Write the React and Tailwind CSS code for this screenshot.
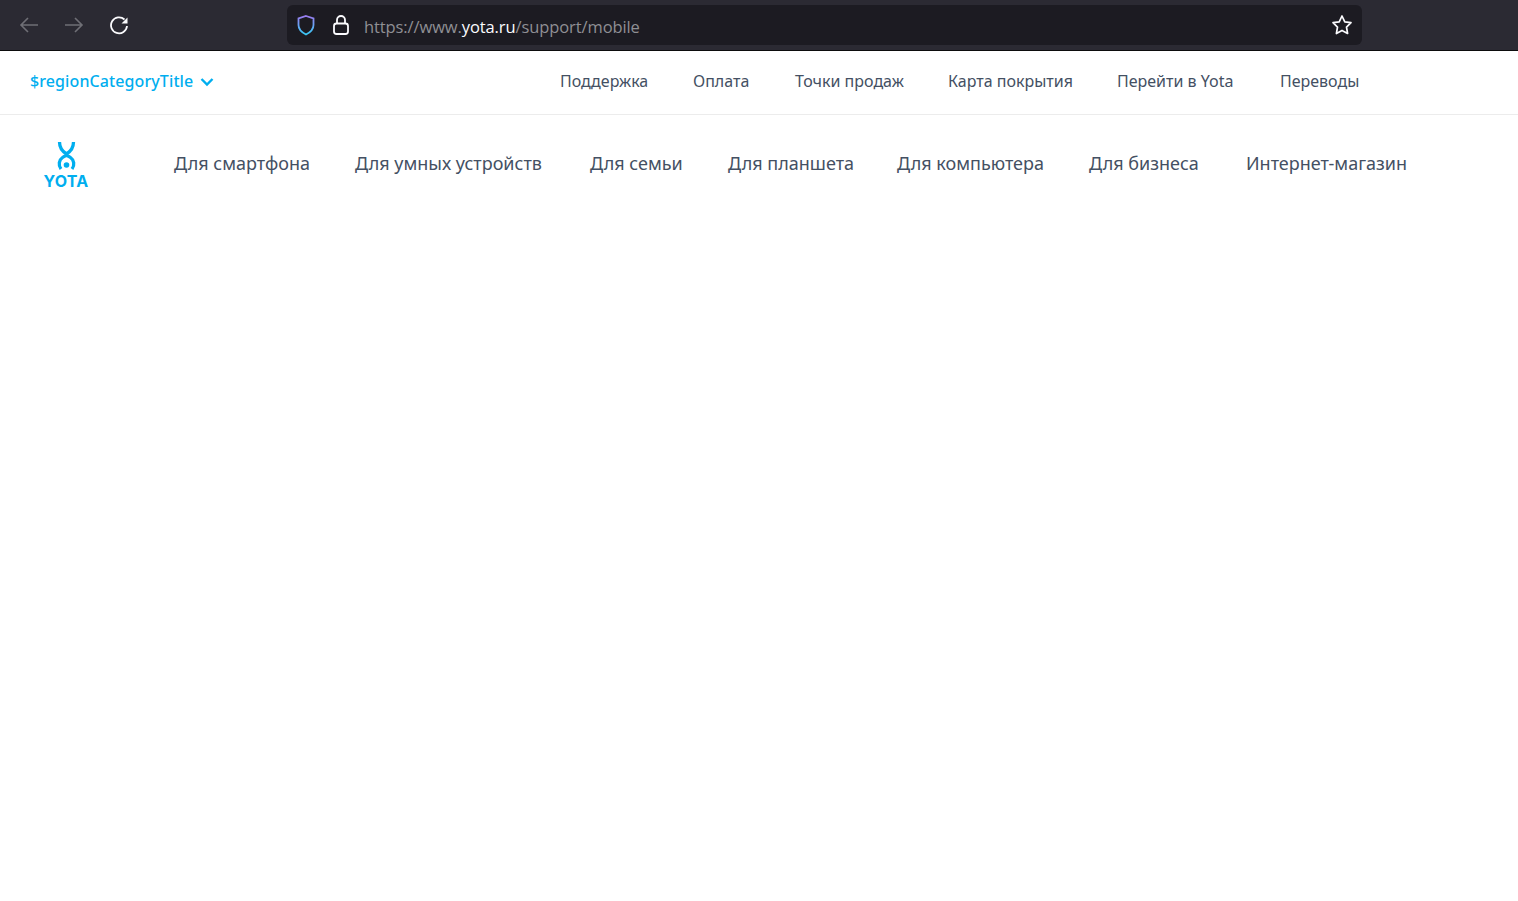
const top = [
  ["Поддержка", "w-[88px]"],
  ["Оплата", "w-[57px]"],
  ["Точки продаж", "w-[108px]"],
  ["Карта покрытия", "w-[124px]"],
  ["Перейти в Yota", "w-[118px]"],
  ["Переводы", "w-[79px]"],
];
const main = [
  ["Для смартфона", "w-[136px]"],
  ["Для умных устройств", "w-[190px]"],
  ["Для семьи", "w-[93px]"],
  ["Для планшета", "w-[124px]"],
  ["Для компьютера", "w-[147px]"],
  ["Для бизнеса", "w-[112px]"],
  ["Интернет-магазин", "w-[164px]"],
];

function Logo() {
  return (
    <div className="flex w-[46px] flex-col items-center">
      <svg width="21" height="29" viewBox="0 0 21 29" fill="none" className="block">
        <path d="M3.500 1C3.500 7 6.500 10.500 10.500 13C14.500 10.500 17.500 7 17.500 1" stroke="#00aeef" strokeWidth="3.300" />
        <path d="M5 28C2 24 3 19 6.500 16.500Q8.500 15 10.500 14.500Q12.500 15 14.500 16.500C18 19 19 24 16 28" stroke="#00aeef" strokeWidth="3.300" />
        <circle cx="10.500" cy="24" r="2.800" fill="#00aeef" />
      </svg>
      <span className="mt-[3px] font-['Inter',sans-serif] text-[16px] leading-[16px] font-bold tracking-[0.3px] text-[#00aeef]">YOTA</span>
    </div>
  );
}

export default function App() {
  return (
    <div className="min-h-[901px] bg-white font-['Noto_Sans',sans-serif]">
      <div className="flex h-[51px] items-center border-b border-[#0c0c0d] bg-[#2b2a33]">
        <div className="ml-[19px] flex items-center gap-[25px]">
          <svg width="20" height="20" viewBox="0 0 20 20" fill="none" stroke="#6f6f76" strokeWidth="1.600"><path d="M19 10H2M9 3l-7 7 7 7" /></svg>
          <svg width="20" height="20" viewBox="0 0 20 20" fill="none" stroke="#6f6f76" strokeWidth="1.600"><path d="M1 10h17M11 3l7 7-7 7" /></svg>
          <svg width="20" height="20" viewBox="0 0 20 20" fill="none" stroke="#fbfbfe" strokeWidth="1.800"><path d="M15.500 4.500A8 8 0 1 0 18 11" /><path d="M18.500 2.500v6h-6z" fill="#fbfbfe" stroke="none" /></svg>
        </div>
        <div className="ml-[158px] flex h-[40px] w-[1075px] items-center rounded-[6px] bg-[#1c1b22] pl-[9px] pr-[9px]">
          <svg width="20" height="22" viewBox="0 0 20 22" fill="none" strokeWidth="1.800">
            <defs><linearGradient id="sh" x1="0" y1="0" x2="0" y2="1"><stop offset="0" stopColor="#9a7cf0" /><stop offset="1" stopColor="#38c8f5" /></linearGradient></defs>
            <path d="M10 2l7.500 2.500v6.500c0 4.500-3.500 7.500-7.500 9.500-4-2-7.500-5-7.500-9.500V4.500z" stroke="url(#sh)" />
          </svg>
          <svg className="ml-[15px]" width="20" height="22" viewBox="0 0 20 22" fill="none" stroke="#fbfbfe" strokeWidth="1.800"><rect x="3" y="9.500" width="14" height="10.500" rx="2.500" /><path d="M6 9.500V6a4 4 0 0 1 8 0v3.500" /></svg>
          <div className="ml-[13px] translate-y-[2px] font-['Open_Sans',sans-serif] text-[16.500px] leading-[24px] tracking-[-0.1px] text-[#8f8f94]">https://www.<span className="text-[#fbfbfe]">yota.ru</span>/support/mobile</div>
          <svg className="ml-auto" width="22" height="22" viewBox="0 0 22 22" fill="none" stroke="#fbfbfe" strokeWidth="1.700" strokeLinejoin="round"><path d="M11 2l2.800 5.900 6.200.8-4.500 4.400 1.100 6.400L11 16.400l-5.600 3.100 1.100-6.400L2 8.700l6.200-.8z" /></svg>
        </div>
      </div>

      <div className="flex h-[64px] items-center border-b border-[#ececec] pb-[4px] pl-[30px] pr-[159px]">
        <div className="flex items-center gap-[7px] text-[16px] font-medium tracking-[0.1px] text-[#00aeef]">
          <span>$regionCategoryTitle</span>
          <svg width="14" height="10" viewBox="0 0 14 10" fill="none" stroke="#00aeef" strokeWidth="2.400" className="translate-y-[1px]"><path d="M1.500 2l5.500 5.500L12.500 2" /></svg>
        </div>
        <nav className="ml-auto flex gap-[45px] text-[16px] text-[#445063]">
          {top.map(([t, w]) => <span key={t} className={w + " whitespace-nowrap"}>{t}</span>)}
        </nav>
      </div>

      <div className="flex h-[100px] pl-[43px] pt-[26px]">
        <Logo />
        <nav className="ml-[85px] flex gap-[45px] pt-[8px] text-[18px] leading-[28px] text-[#445063]">
          {main.map(([t, w]) => <span key={t} className={w + " whitespace-nowrap"}>{t}</span>)}
        </nav>
      </div>
    </div>
  );
}
